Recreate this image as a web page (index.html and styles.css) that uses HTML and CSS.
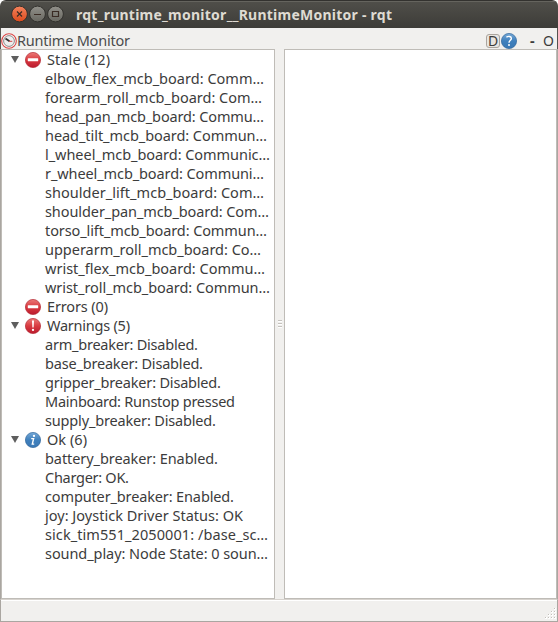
FILE: index.html
```
<!DOCTYPE html>
<html lang="en">
<head>
<meta charset="utf-8">
<title>rqt_runtime_monitor__RuntimeMonitor - rqt</title>
<link rel="stylesheet" href="styles.css">
</head>
<body>
<svg class="defs" width="0" height="0">
  <defs>
    <linearGradient id="red" x1="0" y1="0" x2="0" y2="1"><stop offset="0" stop-color="#ea7a78"/><stop offset=".5" stop-color="#d93a40"/><stop offset="1" stop-color="#bb1a2e"/></linearGradient>
    <linearGradient id="blue" x1="0" y1="0" x2="0" y2="1"><stop offset="0" stop-color="#77a9d6"/><stop offset=".5" stop-color="#3f80bd"/><stop offset="1" stop-color="#3a78b4"/></linearGradient>
    <linearGradient id="orange" x1="0" y1="0" x2="0" y2="1"><stop offset="0" stop-color="#f4835d"/><stop offset="1" stop-color="#dc4a1c"/></linearGradient>
    <linearGradient id="grey" x1="0" y1="0" x2="0" y2="1"><stop offset="0" stop-color="#91908a"/><stop offset="1" stop-color="#686760"/></linearGradient>
    <symbol id="stop" viewBox="0 0 16 16"><circle cx="8" cy="8" r="7.6" fill="url(#red)" stroke="#b52a34" stroke-width=".7"/><rect x="2.8" y="6.2" width="10.4" height="3" rx=".5" fill="#fff"/></symbol>
    <symbol id="warn" viewBox="0 0 16 16"><circle cx="8" cy="8" r="7.6" fill="url(#red)" stroke="#b52a34" stroke-width=".7"/><path d="M7 2.5h2l-.4 6.9H7.4z" fill="#fff"/><circle cx="8" cy="11.9" r="1.15" fill="#fff"/></symbol>
    <symbol id="info" viewBox="0 0 16 16"><circle cx="8" cy="8" r="7.6" fill="url(#blue)" stroke="#2f669c" stroke-width=".7"/><circle cx="9" cy="3.9" r="1.15" fill="#fff"/><path d="M6.2 6.6h2.4L7.3 12.1h1.9" fill="none" stroke="#fff" stroke-width="1.4"/></symbol>
    <symbol id="help" viewBox="0 0 16 16"><circle cx="8" cy="8" r="7.6" fill="url(#blue)" stroke="#2f669c" stroke-width=".7"/><path d="M5.4 4.3C7 3 10.4 3 10.4 5.4C10.4 7.2 8 7.3 8 9.7" fill="none" stroke="#fff" stroke-width="1.4"/><circle cx="8" cy="12.1" r="1" fill="#fff"/></symbol>
  </defs>
</svg>
<div class="window">
  <header class="titlebar">
    <svg class="controls" width="54" height="18" viewBox="0 0 54 18">
      <g stroke="#33322e" stroke-width="1">
        <circle cx="9.5" cy="9" r="7.9" fill="url(#orange)"/>
        <circle cx="27.5" cy="9" r="7.9" fill="url(#grey)"/>
        <circle cx="45.5" cy="9" r="7.9" fill="url(#grey)"/>
      </g>
      <g fill="none" stroke="#3a2b24" stroke-width="1.2"><path d="M7 6.5l5 5M12 6.5l-5 5"/><path d="M24 9.5h7"/><path d="M42.5 6.5h6v5h-6z"/></g>
    </svg>
    <span class="title" data-w="316">rqt_runtime_monitor__RuntimeMonitor - rqt</span>
  </header>
  <div class="dockbar">
    <svg class="gauge" width="16" height="16" viewBox="0 0 16 16"><circle cx="8" cy="8" r="7.3" fill="#fff" stroke="#d94343" stroke-width="1.1"/><circle cx="8" cy="8" r="5.4" fill="#eee" stroke="#8b8b8b" stroke-width="1"/><path d="M4.5 5.5l4 2.8" stroke="#333" stroke-width="1.7"/><path d="M8 8.3h3.3" stroke="#c44" stroke-width="1"/></svg>
    <span class="docktitle" data-w="113">Runtime Monitor</span>
    <span class="dbutton">D</span>
    <svg class="help" width="16" height="16"><use href="#help"/></svg>
    <span class="minus">-</span>
    <span class="oh">O</span>
  </div>
  <main class="content">
    <div class="tree">
      <div class="group"><i class="arrow"></i><svg width="16" height="16"><use href="#stop"/></svg><span data-w="63">Stale (12)</span></div>
      <div class="item"><span data-w="219">elbow_flex_mcb_board: Comm…</span></div>
      <div class="item"><span data-w="217">forearm_roll_mcb_board: Com…</span></div>
      <div class="item"><span data-w="219">head_pan_mcb_board: Commu…</span></div>
      <div class="item"><span data-w="222">head_tilt_mcb_board: Commun…</span></div>
      <div class="item"><span data-w="225">l_wheel_mcb_board: Communic…</span></div>
      <div class="item"><span data-w="219">r_wheel_mcb_board: Communi…</span></div>
      <div class="item"><span data-w="219">shoulder_lift_mcb_board: Com…</span></div>
      <div class="item"><span data-w="224">shoulder_pan_mcb_board: Com…</span></div>
      <div class="item"><span data-w="222">torso_lift_mcb_board: Commun…</span></div>
      <div class="item"><span data-w="216">upperarm_roll_mcb_board: Co…</span></div>
      <div class="item"><span data-w="220">wrist_flex_mcb_board: Commu…</span></div>
      <div class="item"><span data-w="225">wrist_roll_mcb_board: Commun…</span></div>
      <div class="group"><i class="arrow none"></i><svg width="16" height="16"><use href="#stop"/></svg><span data-w="61">Errors (0)</span></div>
      <div class="group"><i class="arrow"></i><svg width="16" height="16"><use href="#warn"/></svg><span data-w="83">Warnings (5)</span></div>
      <div class="item"><span data-w="153">arm_breaker: Disabled.</span></div>
      <div class="item"><span data-w="158">base_breaker: Disabled.</span></div>
      <div class="item"><span data-w="176">gripper_breaker: Disabled.</span></div>
      <div class="item"><span data-w="190">Mainboard: Runstop pressed</span></div>
      <div class="item"><span data-w="171">supply_breaker: Disabled.</span></div>
      <div class="group"><i class="arrow"></i><svg width="16" height="16"><use href="#info"/></svg><span data-w="40">Ok (6)</span></div>
      <div class="item"><span data-w="173">battery_breaker: Enabled.</span></div>
      <div class="item"><span data-w="84">Charger: OK.</span></div>
      <div class="item"><span data-w="189">computer_breaker: Enabled.</span></div>
      <div class="item"><span data-w="198">joy: Joystick Driver Status: OK</span></div>
      <div class="item"><span data-w="223">sick_tim551_2050001: /base_sc…</span></div>
      <div class="item"><span data-w="223">sound_play: Node State: 0 soun…</span></div>
    </div>
    <div class="splitter"><i></i><i></i><i></i></div>
    <div class="detail"></div>
  </main>
  <footer class="status">
    <svg width="12" height="12" viewBox="0 0 12 12"><g fill="#fff"><path d="M10 1h2v2h-2zM10 4h2v2h-2zM7 4h2v2H7zM10 7h2v2h-2zM7 7h2v2H7zM4 7h2v2H4zM10 10h2v2h-2zM7 10h2v2H7zM4 10h2v2H4zM1 10h2v2H1z"/></g><g fill="#c3bfba"><path d="M10 1h1v1h-1zM10 4h1v1h-1zM7 4h1v1H7zM10 7h1v1h-1zM7 7h1v1H7zM4 7h1v1H4zM10 10h1v1h-1zM7 10h1v1H7zM4 10h1v1H4zM1 10h1v1H1z"/></g></svg>
  </footer>
</div>
<script src="fit.js"></script>
</body>
</html>
```
FILE: styles.css
```
* { box-sizing: border-box; }
body {
  margin: 0;
  background: #fff;
  color: #3c3c3c;
  font: 14.5px/19px "Noto Sans", "Open Sans", sans-serif;
}
.defs { position: absolute; }
svg { display: block; flex: none; }
span { white-space: nowrap; flex: none; }
.window {
  width: 558px;
  height: 622px;
  display: flex;
  flex-direction: column;
  background: #f1f0ee;
  border-radius: 6px 6px 0 0;
  overflow: hidden;
}
.titlebar {
  height: 28px;
  flex: none;
  display: flex;
  align-items: center;
  padding: 0 0 1px 10px;
  background: linear-gradient(#504f4a, #3d3c38);
  border-top: 1px solid #33322f;
  box-shadow: inset 0 1px #65645e;
}
.title {
  margin-left: 12px;
  color: #dfdbd2;
  font-size: 14px;
  font-weight: 700;
}
.dockbar {
  height: 21px;
  flex: none;
  display: flex;
  align-items: center;
  border: solid #55534f;
  border-width: 0 1px;
  padding-top: 4px;
}
.docktitle { color: #4c4c4c; width: 469px; }
.dbutton {
  width: 14px;
  height: 14px;
  border: 1px solid #aaa59e;
  border-radius: 3px;
  background: #e8e5e1;
  font-size: 14px;
  line-height: 12px;
  text-align: center;
}
.help { margin-left: 1px; }
.minus { margin-left: 13px; font-weight: 700; width: 8px; }
.oh { margin-left: 5px; font-size: 14px; }
.content {
  height: 550px;
  flex: none;
  display: flex;
  border: solid #aaa6a1;
  border-width: 0 1px;
}
.tree, .detail { background: #fff; border: 1px solid #bfbcb7; }
.tree { width: 274px; overflow: hidden; }
.detail { flex: 1; }
.splitter {
  width: 9px;
  display: flex;
  flex-direction: column;
  align-items: center;
  justify-content: center;
  gap: 1px;
}
.splitter i { width: 4px; height: 2px; background: #c5c2bd; border-bottom: 1px solid #fff; }
.group, .item { height: 19px; display: flex; align-items: center; }
.group { padding-left: 9px; }
.group svg { margin: 0 6px 0 6px; }
.item { padding-left: 43px; }
.arrow {
  width: 8px;
  height: 7px;
  flex: none;
  background: #5e5e5e;
  clip-path: polygon(0 0, 100% 0, 50% 100%);
}
.none { visibility: hidden; }
.status {
  flex: 1;
  border: 1px solid #aaa6a1;
  border-top-color: #d7d3ce;
  box-shadow: inset 0 1px #fff;
  display: flex;
  justify-content: flex-end;
  align-items: flex-end;
  padding: 0 1px 2px 0;
}
```
FILE: fit.js
```
document.querySelectorAll("[data-w]").forEach(function (el) {
  var range = document.createRange();
  range.selectNodeContents(el);
  var natural = range.getBoundingClientRect().width;
  var target = Number(el.dataset.w);
  el.style.letterSpacing = (target - natural) / (el.textContent.length - 1) + "px";
});
```
